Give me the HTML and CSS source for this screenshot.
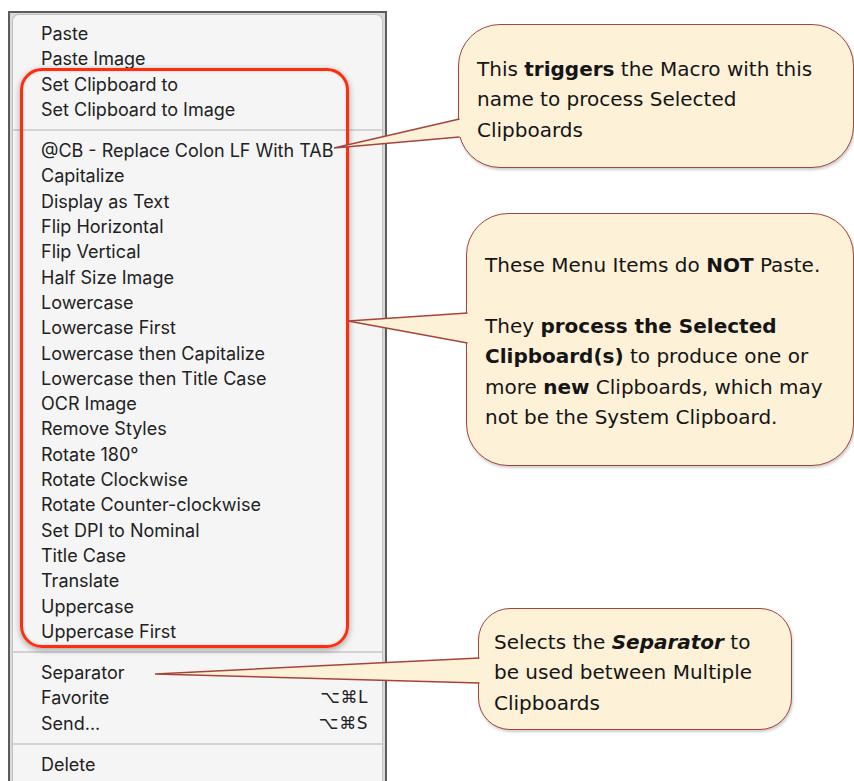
FILE: index.html
```html
<!DOCTYPE html>
<html>
<head>
<meta charset="utf-8">
<link rel="stylesheet" href="styles.css">
</head>
<body>
<div class="page">
  <div class="frame">
    <div class="menu">
      <div class="item">Paste</div>
      <div class="item">Paste Image</div>
      <div class="group">
        <div class="item">Set Clipboard to</div>
        <div class="item">Set Clipboard to Image</div>
        <div class="sep"></div>
        <div class="item">@CB - Replace Colon LF With TAB</div>
        <div class="item">Capitalize</div>
        <div class="item">Display as Text</div>
        <div class="item">Flip Horizontal</div>
        <div class="item">Flip Vertical</div>
        <div class="item">Half Size Image</div>
        <div class="item">Lowercase</div>
        <div class="item">Lowercase First</div>
        <div class="item">Lowercase then Capitalize</div>
        <div class="item">Lowercase then Title Case</div>
        <div class="item">OCR Image</div>
        <div class="item">Remove Styles</div>
        <div class="item">Rotate 180°</div>
        <div class="item">Rotate Clockwise</div>
        <div class="item">Rotate Counter-clockwise</div>
        <div class="item">Set DPI to Nominal</div>
        <div class="item">Title Case</div>
        <div class="item">Translate</div>
        <div class="item">Uppercase</div>
        <div class="item">Uppercase First</div>
      </div>
      <div class="sep"></div>
      <div class="item">Separator</div>
      <div class="item"><span>Favorite</span><span class="key">⌥⌘L</span></div>
      <div class="item"><span>Send...</span><span class="key">⌥⌘S</span></div>
      <div class="sep"></div>
      <div class="item">Delete</div>
    </div>
  </div>

  <div class="bubble b1">
    <p>This <b>triggers</b> the Macro with this name to process Selected Clipboards</p>
  </div>
  <div class="bubble b2">
    <p>These Menu Items do <b>NOT</b> Paste.</p>
    <p class="gap">They <b>process the Selected Clipboard(s)</b> to produce one or more <b>new</b> Clipboards, which may not be the System Clipboard.</p>
  </div>
  <div class="bubble b3">
    <p>Selects the <b><i>Separator</i></b> to be used between Multiple Clipboards</p>
  </div>

  <svg class="pointers" width="854" height="781" viewBox="0 0 854 781">
    <g class="ptr">
      <polygon points="334,148 460,119 464,119 464,137 460,137"/>
      <polyline points="459.5,119 334,148 459.5,137"/>
    </g>
    <g class="ptr">
      <polygon points="348,321 468,313 472,313 472,343 468,343"/>
      <polyline points="467.5,313 348,321 467.5,343"/>
    </g>
    <g class="ptr">
      <polygon points="155,674 480,658 484,658 484,683 480,683"/>
      <polyline points="479.5,658 155,674 479.5,683"/>
    </g>
  </svg>
</div>
</body>
</html>
```
FILE: styles.css
```css
html, body {
  margin: 0;
  padding: 0;
  background: #ffffff;
  overflow: hidden;
}
.page {
  position: relative;
  width: 854px;
  height: 781px;
  overflow: hidden;
}
.frame {
  margin: 11px 0 0 8px;
  width: 371px;
  height: 790px;
  border: 2px solid #5c5c5c;
  border-bottom: none;
  background: #d9d9d9;
  padding: 1px 2px 0 2px;
}
.menu {
  background: #f5f5f5;
  border: 1px solid #c2c2c2;
  border-bottom: none;
  border-radius: 7px 7px 0 0;
  padding-top: 6px;
  height: 100%;
  box-sizing: border-box;
  font-family: Inter, "DejaVu Sans", sans-serif;
  font-size: 18px;
  color: #222222;
}
.item {
  display: flex;
  justify-content: space-between;
  line-height: 25.3px;
  height: 25.3px;
  padding: 0 14px 0 28px;
  white-space: nowrap;
}
.key {
  font-family: "DejaVu Sans", sans-serif;
  font-size: 17px;
  letter-spacing: 0.5px;
}
.sep {
  height: 2px;
  background: #d3d3d3;
  margin: 7px 0 7px;
}
.group {
  position: relative;
}
.group::after {
  content: "";
  position: absolute;
  top: -4px;
  bottom: -4px;
  left: 7px;
  right: 33px;
  border: 3px solid #ff2d0d;
  border-radius: 22px;
  box-shadow: 0 2px 6px rgba(0, 0, 0, 0.35), inset 0 0 3px rgba(0, 0, 0, 0.15);
  pointer-events: none;
}
.bubble {
  position: absolute;
  box-sizing: border-box;
  background: #fdf1d8;
  border: 1.5px solid #a5443c;
  box-shadow: 1px 2px 3px rgba(0, 0, 0, 0.2);
  font-family: "DejaVu Sans", Verdana, sans-serif;
  font-size: 20px;
  line-height: 30.4px;
  color: #151515;
}
.bubble p {
  margin: 0;
}
.bubble .gap {
  margin-top: 30.4px;
}
.b1 {
  left: 458px;
  top: 24px;
  width: 396px;
  height: 144px;
  border-radius: 42px;
  padding: 29px 0 0 18px;
}
.b2 {
  left: 466px;
  top: 213px;
  width: 388px;
  height: 253px;
  border-radius: 42px;
  padding: 36px 0 0 18px;
}
.b3 {
  left: 478px;
  top: 608px;
  width: 314px;
  height: 122px;
  border-radius: 32px;
  padding: 18px 0 0 15px;
}
.b1 p { width: 360px; }
.b2 p { width: 362px; }
.b3 p { width: 266px; }
.pointers {
  position: absolute;
  left: 0;
  top: 0;
  pointer-events: none;
}
.ptr polygon {
  fill: #fdf1d8;
  stroke: none;
}
.ptr polyline {
  fill: none;
  stroke: #a5443c;
  stroke-width: 1.5;
  stroke-linejoin: miter;
}
```
